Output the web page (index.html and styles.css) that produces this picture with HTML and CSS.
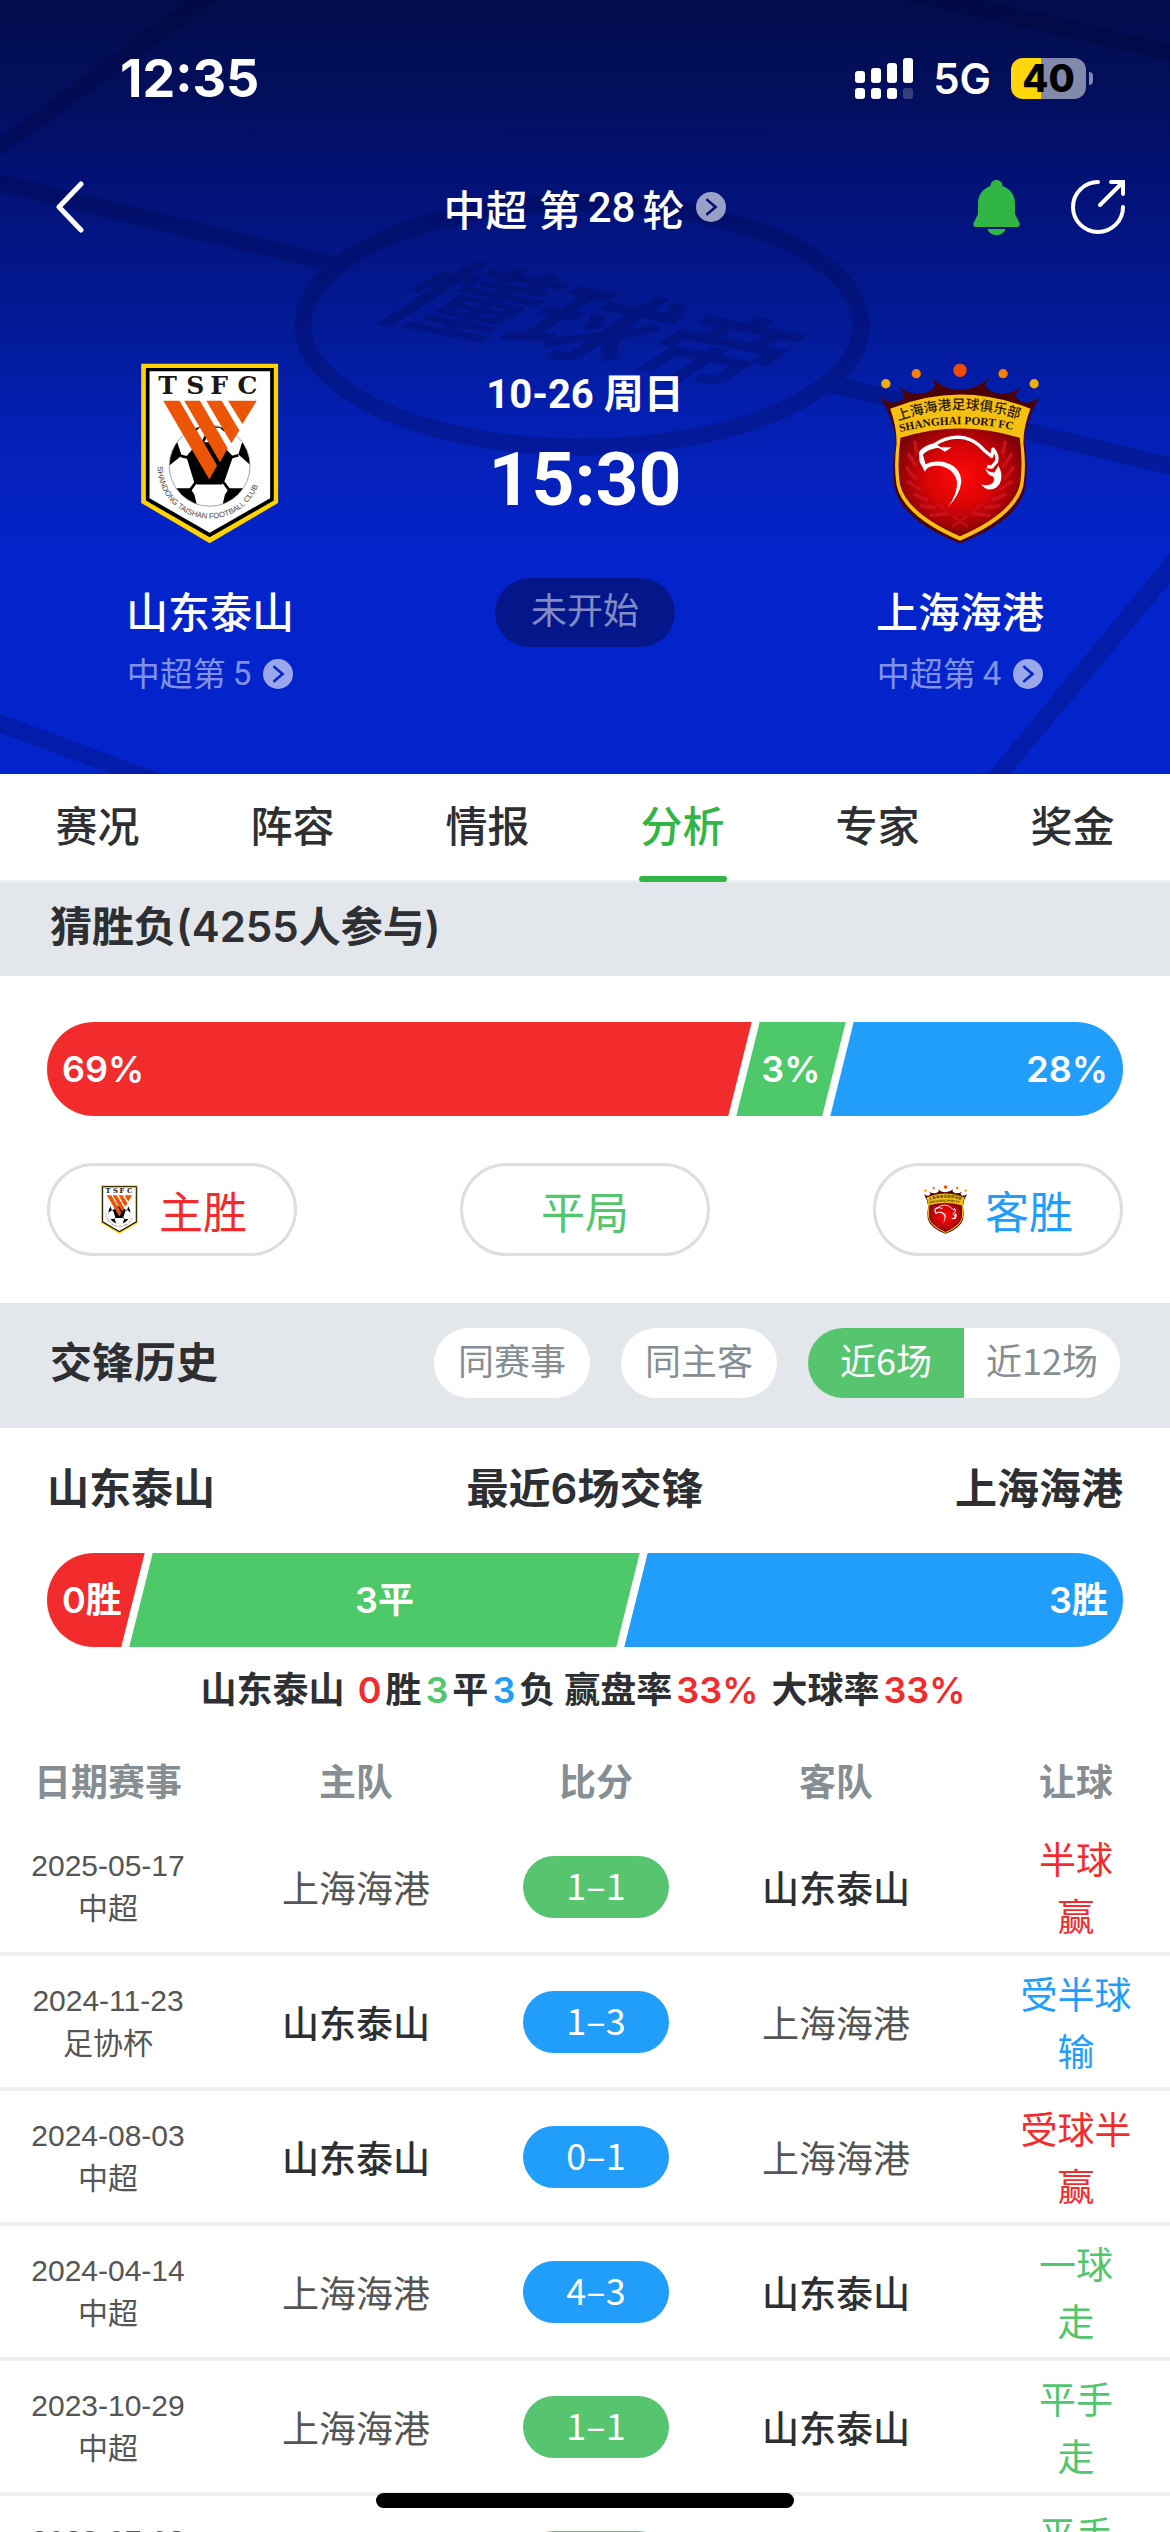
FILE: index.html
```html
<!DOCTYPE html>
<html lang="zh-CN">
<head>
  <meta charset="UTF-8">
  <meta name="viewport" content="width=device-width, initial-scale=1.0">
  <title>山东泰山 - 上海海港</title>
  <link rel="stylesheet" href="styles.css">
</head>
<body>
  <!-- shared icon -->
  <svg class="sprite" aria-hidden="true">
    <symbol id="icon-go" viewBox="0 0 30 30">
      <path fill="currentColor" fill-rule="evenodd" d="M15 0a15 15 0 1 0 0 30a15 15 0 1 0 0-30ZM11.200 6.200L21.600 15L11.200 23.800Q9.500 23 10 21.500L17.500 15L10 8.500Q9.500 7 11.200 6.200Z"/>
    </symbol>
  </svg>

  <header class="hero">
    <svg class="hero-pitch" viewBox="0 0 1170 774" preserveAspectRatio="xMidYMid slice" aria-hidden="true">
      <path d="M188 0H218L0 156V137Z"/>
      <path d="M0 174L340 257L323 270L0 192Z"/>
      <path d="M846 379L1170 457V475L829 393Z"/>
      <path d="M0 714L162 774H112L0 733Z"/>
      <path d="M1170 553L988 774H1010L1170 583Z"/>
      <path d="M903 0H985L1170 44V61Z"/>
      <ellipse cx="582" cy="325" rx="279" ry="122"/>
      <text transform="matrix(1.25 0.25 -1.05 0.68 366 314)">懂球帝</text>
    </svg>

    <div class="status-bar">
      <span class="clock">12:35</span>
      <div class="status-icons">
        <svg class="signal" viewBox="0 0 58 41">
          <rect x="0" y="13" width="10" height="12" rx="3"/>
          <rect x="16" y="10" width="10" height="15" rx="3"/>
          <rect x="32" y="5" width="10" height="20" rx="3"/>
          <rect x="48" y="0" width="10" height="25" rx="3"/>
          <rect x="0" y="30" width="10" height="11" rx="3"/>
          <rect x="16" y="30" width="10" height="11" rx="3"/>
          <rect x="32" y="30" width="10" height="11" rx="3"/>
          <rect x="48" y="30" width="10" height="11" rx="3" opacity="0.2"/>
        </svg>
        <span class="network">5G</span>
        <span class="battery">40</span>
      </div>
    </div>

    <div class="nav-bar">
      <button class="icon-button" aria-label="返回">
        <svg class="icon-back" viewBox="0 0 28 52"><path d="M25 3L3 26L25 49"/></svg>
      </button>
      <a href="#" class="round-link">中超 第<span class="num">28</span>轮<svg class="icon-go"><use href="#icon-go"/></svg></a>
      <div class="nav-actions">
        <button class="icon-button" aria-label="提醒">
          <svg class="icon-bell" viewBox="0 0 47 55"><path d="M23.500 0C27 0 29.500 2.500 29.500 6C38 9 42 16 42 23V34L46.500 43C47.500 45.500 46 47 44 47H3C1 47-.5 45.500.5 43L5 34V23C5 16 9 9 17.500 6C17.500 2.500 20 0 23.500 0ZM14.500 49H32.500C31 53 27.500 55 23.500 55C19.500 55 16 53 14.500 49Z"/></svg>
        </button>
        <button class="icon-button" aria-label="分享">
          <svg class="icon-share" viewBox="0 0 54 54"><path d="M27 2A25 25 0 1 0 52 27M29 25L51 3M40 2H52V14"/></svg>
        </button>
      </div>
    </div>

    <div class="match">
      <div class="team">
        <svg class="crest" viewBox="65 38 412 542">
          <defs>
            <path id="taishan-arc" d="M114 348A156 156 0 0 0 426 348"/>
            <clipPath id="ball-clip"><circle cx="270" cy="346" r="120"/></clipPath>
          </defs>
          <g id="crest-taishan">
            <path fill="#ffd400" d="M65 40H475V457L270 578L65 457Z"/>
            <path fill="#000" d="M79 53H462V450L270 560L79 450Z"/>
            <path fill="#fff" d="M90 63H451V443L270 546L90 443Z"/>
            <text class="crest-tsfc" x="116 200 272 353" y="130">TSFC</text>
            <circle cx="270" cy="346" r="121" fill="#fff" stroke="#777" stroke-width="2"/>
            <g clip-path="url(#ball-clip)" fill="#000">
              <path d="M195 238Q270 215 345 238L312 242L300 232H240L228 242Z"/>
              <path d="M215 300L245 275H300L340 318L313 396L306 402H232L224 396L200 318Z"/>
              <path d="M140 350V290L172 272L186 316L150 344Z"/>
              <path d="M400 350V290L368 272L356 312L392 344Z"/>
              <path d="M165 413H212L224 432L236 480H180Z"/>
              <path d="M375 413H328L316 432L304 480H360Z"/>
              <path fill="none" stroke="#000" stroke-width="8" d="M184 316L214 324M356 314L330 322M228 396L212 418M312 396L328 418M262 250L246 282"/>
            </g>
            <g fill="#ec5406">
              <path d="M131 151H180L292 345L269 387Z"/>
              <path d="M194 151H241L324 293L301 335Z"/>
              <path d="M260 151H306L359 240L335 278Z"/>
              <path d="M325 151H411L368 221Z"/>
            </g>
            <text class="crest-ring"><textPath href="#taishan-arc">SHANDONG TAISHAN FOOTBALL CLUB</textPath></text>
          </g>
        </svg>
        <div class="team-name">山东泰山</div>
        <a href="#" class="team-rank">中超第<span class="num">5</span><svg class="icon-go"><use href="#icon-go"/></svg></a>
      </div>
      <div class="kickoff">
        <div class="kickoff-date">10-26 周日</div>
        <div class="kickoff-time">15:30</div>
        <div class="kickoff-state">未开始</div>
      </div>
      <div class="team">
        <svg class="crest" viewBox="30 38 482 542">
          <defs>
            <radialGradient id="port-red" cx="50%" cy="45%" r="55%">
              <stop offset="0" stop-color="#ff0a06"/>
              <stop offset="0.5" stop-color="#d90406"/>
              <stop offset="1" stop-color="#7c0308"/>
            </radialGradient>
            <path id="port-arc-cn" d="M86 211Q271 144 460 209"/>
            <path id="port-arc-en" d="M92 245Q271 198 456 245"/>
          </defs>
          <g id="crest-port">
            <circle cx="271" cy="60" r="20" fill="#f24b04"/>
            <circle cx="140" cy="70" r="14" fill="#f77f08"/>
            <circle cx="400" cy="70" r="14" fill="#f77f08"/>
            <circle cx="49" cy="100" r="14" fill="#f0ae08"/>
            <circle cx="493" cy="100" r="14" fill="#f0ae08"/>
            <path fill="#4b0207" d="M32 138Q56 160 80 156Q108 148 103 130L88 110Q120 134 156 130Q196 122 196 102L186 82Q222 118 271 118Q320 118 358 82L346 102Q350 122 386 130Q422 134 454 110L439 130Q436 148 462 156Q486 160 510 138Q470 205 464 270Q476 345 467 410Q446 510 271 578Q96 510 75 410Q66 345 80 270Q72 205 32 138Z"/>
            <path fill="#f6c012" d="M62 175Q271 90 482 175Q460 230 461 280Q470 345 461 403Q440 498 271 570Q102 498 81 403Q72 345 81 280Q82 230 62 175Z"/>
            <path fill="url(#port-red)" d="M93 262Q271 206 450 262Q460 340 451 400Q432 486 271 557Q110 486 91 400Q82 340 93 262Z"/>
            <g fill="none" stroke="#c8101a" stroke-width="11" stroke-linecap="round">
              <path d="M136 275L142 308M118 312L138 345M112 352L138 384M118 395L150 416M136 432L172 448M156 466L196 472M184 494L232 490"/>
              <path d="M406 275L400 308M424 312L404 345M430 352L404 384M424 395L392 416M406 432L370 448M386 466L346 472M358 494L310 490"/>
              <path stroke-width="6" d="M206 460L232 484M336 460L310 484M250 526L292 496M292 526L250 496"/>
            </g>
            <path fill="none" stroke="#fff" stroke-width="10" stroke-linejoin="round" d="M194 283Q224 262 262 260Q310 260 344 300L366 318L370 296Q386 314 380 334L366 350L352 348"/>
            <path fill="#fff" d="M194 278Q158 286 148 306L150 334L166 364Q174 342 208 346Q254 354 262 394Q264 430 234 470Q272 432 275 392Q272 346 220 334Q186 330 168 342L160 312Q176 296 206 292L226 304L246 290L214 290Z"/>
            <path fill="#fff" d="M346 352Q354 366 374 366L386 346Q398 366 394 388Q386 418 356 417Q344 414 334 402Q360 408 370 396Q376 386 370 378Q352 374 346 352Z"/>
            <text class="crest-cn"><textPath href="#port-arc-cn">上海海港足球俱乐部</textPath></text>
            <text class="crest-en"><textPath href="#port-arc-en">SHANGHAI PORT FC</textPath></text>
          </g>
        </svg>
        <div class="team-name">上海海港</div>
        <a href="#" class="team-rank">中超第<span class="num">4</span><svg class="icon-go"><use href="#icon-go"/></svg></a>
      </div>
    </div>
  </header>

  <nav class="tabs">
    <a href="#" class="tab">赛况</a>
    <a href="#" class="tab">阵容</a>
    <a href="#" class="tab">情报</a>
    <a href="#" class="tab active">分析</a>
    <a href="#" class="tab">专家</a>
    <a href="#" class="tab">奖金</a>
  </nav>

  <main>
    <section>
      <div class="section-head">
        <h2 class="section-title">猜胜负(4255人参与)</h2>
      </div>
      <div class="vote">
        <div class="ratio">
          <div class="part home" style="flex-grow: 69"><span>69%</span></div>
          <div class="part draw" style="flex-grow: 3"><span>3%</span></div>
          <div class="part away" style="flex-grow: 28"><span>28%</span></div>
        </div>
        <div class="vote-buttons">
          <button class="vote-button red"><svg class="crest-small" viewBox="65 38 412 542"><use href="#crest-taishan"/></svg>主胜</button>
          <button class="vote-button green">平局</button>
          <button class="vote-button blue"><svg class="crest-small" viewBox="30 38 482 542"><use href="#crest-port"/></svg>客胜</button>
        </div>
      </div>
    </section>

    <section>
      <div class="section-head tall">
        <h2 class="section-title">交锋历史</h2>
        <div class="filters">
          <button class="filter">同赛事</button>
          <button class="filter">同主客</button>
          <div class="filter-group">
            <button class="filter active">近6场</button>
            <button class="filter">近12场</button>
          </div>
        </div>
      </div>

      <div class="history">
        <div class="history-title">
          <span>山东泰山</span>
          <span>最近6场交锋</span>
          <span>上海海港</span>
        </div>
        <div class="ratio">
          <div class="part home" style="flex-grow: 0"><span>0胜</span></div>
          <div class="part draw" style="flex-grow: 3"><span>3平</span></div>
          <div class="part away" style="flex-grow: 3"><span>3胜</span></div>
        </div>
        <p class="summary">山东泰山 <b class="red">0</b>胜<b class="green">3</b>平<b class="blue">3</b>负 赢盘率<b class="red">33%</b> 大球率<b class="red">33%</b></p>
      </div>

      <table class="games">
        <thead>
          <tr>
            <th class="col-date">日期赛事</th>
            <th>主队</th>
            <th>比分</th>
            <th>客队</th>
            <th class="col-odds">让球</th>
          </tr>
        </thead>
        <tbody>
          <tr>
            <td class="col-date">2025-05-17<br>中超</td>
            <td>上海海港</td>
            <td><span class="score draw">1–1</span></td>
            <td class="own">山东泰山</td>
            <td class="col-odds red">半球<br>赢</td>
          </tr>
          <tr>
            <td class="col-date">2024-11-23<br>足协杯</td>
            <td class="own">山东泰山</td>
            <td><span class="score">1–3</span></td>
            <td>上海海港</td>
            <td class="col-odds blue">受半球<br>输</td>
          </tr>
          <tr>
            <td class="col-date">2024-08-03<br>中超</td>
            <td class="own">山东泰山</td>
            <td><span class="score">0–1</span></td>
            <td>上海海港</td>
            <td class="col-odds red">受球半<br>赢</td>
          </tr>
          <tr>
            <td class="col-date">2024-04-14<br>中超</td>
            <td>上海海港</td>
            <td><span class="score">4–3</span></td>
            <td class="own">山东泰山</td>
            <td class="col-odds green">一球<br>走</td>
          </tr>
          <tr>
            <td class="col-date">2023-10-29<br>中超</td>
            <td>上海海港</td>
            <td><span class="score draw">1–1</span></td>
            <td class="own">山东泰山</td>
            <td class="col-odds green">平手<br>走</td>
          </tr>
          <tr>
            <td class="col-date">2023-07-03<br>中超</td>
            <td class="own">山东泰山</td>
            <td><span class="score draw">1–1</span></td>
            <td>上海海港</td>
            <td class="col-odds green">平手<br>走</td>
          </tr>
        </tbody>
      </table>
    </section>
  </main>

  <div class="home-indicator"></div>
</body>
</html>
```
FILE: styles.css
```css
* {
  box-sizing: border-box;
}

body {
  margin: 0;
  background-color: #fff;
  color: #2d2f33;
  font-family: Inter, "Noto Sans CJK SC", sans-serif;
  font-size: 36px;
}

a {
  color: inherit;
  text-decoration: none;
}

button {
  padding: 0;
  border: none;
  background: none;
  font-family: inherit;
  font-size: 36px;
  cursor: pointer;
}

svg {
  display: block;
}

.sprite {
  position: absolute;
  width: 0;
  height: 0;
}

.red {
  color: #f22c2d;
}

.green {
  color: #52c66c;
}

.blue {
  color: #209efa;
}

/* club badges */
.crest-tsfc {
  font: bold 75px "DejaVu Serif", serif;
  fill: #1f1512;
}

.crest-ring {
  font: 23px "Liberation Sans", sans-serif;
  fill: #444;
}

.crest-cn {
  font: 500 41px "Noto Sans CJK SC", sans-serif;
  fill: #2a1a05;
}

.crest-en {
  font: bold 34px "Liberation Serif", serif;
  fill: #1c0f04;
}

/* header */
.hero {
  position: relative;
  overflow: hidden;
  padding-bottom: 80px;
  color: #fff;
  background: linear-gradient(#020d4c 0, #020f5c 90px, #021070 160px, #021583 240px, #031a98 330px, #0420b4 430px, #0424cb 560px);
}

.hero-pitch {
  position: absolute;
  top: 0;
  left: 0;
  width: 100%;
  height: 100%;
  fill: #000028;
  opacity: 0.2;
}

.hero-pitch ellipse {
  fill: none;
  stroke: #000028;
  stroke-width: 17px;
}

.hero-pitch text {
  font: bold 100px "Noto Sans CJK SC", sans-serif;
}

.status-bar {
  position: relative;
  display: flex;
  justify-content: space-between;
  align-items: center;
  height: 156px;
  padding: 0 77px 0 120px;
}

.clock {
  font-size: 52px;
  font-weight: 700;
}

.status-icons {
  display: flex;
  align-items: center;
  gap: 20px;
}

.signal {
  width: 58px;
  height: 41px;
  fill: #fff;
}

.network {
  font-size: 42px;
  font-weight: 600;
}

.battery {
  position: relative;
  width: 75px;
  height: 41px;
  margin-right: 7px;
  border-radius: 12px;
  background: linear-gradient(90deg, #ffd60a 40%, #8389ad 40%);
  color: #000;
  font-size: 38px;
  font-weight: 800;
  line-height: 41px;
  text-align: center;
}

.battery::after {
  content: "";
  position: absolute;
  top: 14px;
  right: -7px;
  width: 4px;
  height: 13px;
  border-radius: 0 4px 4px 0;
  background-color: #8389ad;
}

.nav-bar {
  position: relative;
  display: flex;
  justify-content: center;
  align-items: center;
  height: 102px;
}

.nav-bar > .icon-button {
  position: absolute;
  left: 56px;
}

.nav-actions {
  position: absolute;
  right: 45px;
  display: flex;
  gap: 51px;
}

.icon-back {
  width: 28px;
  height: 52px;
  fill: none;
  stroke: #fff;
  stroke-width: 5px;
  stroke-linecap: round;
  stroke-linejoin: round;
}

.icon-bell {
  width: 47px;
  height: 55px;
  fill: #31b545;
}

.icon-share {
  width: 54px;
  height: 54px;
  fill: none;
  stroke: #fff;
  stroke-width: 4px;
  stroke-linecap: round;
}

.icon-go {
  width: 30px;
  height: 30px;
  margin-left: 12px;
}

.num {
  margin: 0 7px;
  font-family: Roboto, sans-serif;
}

.round-link {
  display: flex;
  align-items: center;
  font-size: 42px;
  font-weight: 500;
  white-space: pre;
}

.round-link .icon-go {
  color: rgba(255, 255, 255, 0.6);
}

.match {
  position: relative;
  display: grid;
  grid-template-columns: 14fr 11fr 14fr;
  padding-top: 105px;
}

.team,
.kickoff {
  display: flex;
  flex-direction: column;
  align-items: center;
}

.crest {
  width: 162px;
  height: 181px;
}

.team-name {
  margin-top: 39px;
  font-size: 42px;
  font-weight: 500;
  line-height: 60px;
}

.team-rank {
  display: flex;
  align-items: center;
  margin-top: 11px;
  color: rgba(255, 255, 255, 0.5);
  font-size: 33px;
  line-height: 40px;
}

.team-rank .num {
  margin-right: 0;
}

.team-rank .icon-go {
  color: rgba(255, 255, 255, 0.6);
}

.kickoff {
  padding-top: 7px;
  font-family: Roboto, "Noto Sans CJK SC", sans-serif;
}

.kickoff-date {
  font-size: 40px;
  font-weight: 700;
  line-height: 50px;
}

.kickoff-time {
  margin-top: 19px;
  font-size: 75px;
  font-weight: 700;
  line-height: 80px;
}

.kickoff-state {
  width: 180px;
  margin-top: 59px;
  border-radius: 35px;
  background-color: #03178b;
  color: rgba(255, 255, 255, 0.5);
  font-size: 36px;
  line-height: 69px;
  text-align: center;
}

/* tabs */
.tabs {
  display: flex;
  border-bottom: 2px solid #efeff0;
}

.tab {
  position: relative;
  flex: 1;
  font-size: 42px;
  font-weight: 500;
  line-height: 106px;
  text-align: center;
}

.tab.active {
  color: #31b545;
}

.tab.active::after {
  content: "";
  position: absolute;
  bottom: -2px;
  left: calc(50% - 44px);
  width: 88px;
  height: 6px;
  border-radius: 3px;
  background-color: #31b545;
}

/* sections */
.section-head {
  display: flex;
  justify-content: space-between;
  align-items: center;
  min-height: 94px;
  padding: 0 50px 5px;
  background-color: #e3e6eb;
}

.section-head.tall {
  min-height: 125px;
}

.section-title {
  margin: 0;
  font-size: 42px;
  font-weight: 600;
  line-height: 60px;
}

.vote {
  padding: 46px 47px 47px;
}

/* ratio bar, parts are cut at a slant */
.ratio {
  display: flex;
  gap: 8px;
  height: 94px;
  border-radius: 47px;
  overflow: hidden;
  color: #fff;
  font-size: 36px;
  font-weight: 600;
  line-height: 94px;
}

.part {
  position: relative;
  z-index: 0;
  flex: 1 1 0;
  min-width: 86px;
  text-align: center;
}

.part::before {
  content: "";
  position: absolute;
  z-index: -1;
  top: 0;
  right: 0;
  bottom: 0;
  left: 0;
  transform: skewX(-14deg);
}

.part.home {
  text-align: left;
}

.part.home span {
  margin-left: 15px;
}

.part.home::before {
  left: -40px;
  background-color: #f22c2d;
}

.part.draw::before {
  background-color: #4dc969;
}

.part.away {
  text-align: right;
}

.part.away span {
  margin-right: 15px;
}

.part.away::before {
  right: -40px;
  background-color: #209efa;
}

.vote-buttons {
  display: flex;
  justify-content: space-between;
  margin-top: 47px;
}

.vote-button {
  display: flex;
  justify-content: center;
  align-items: center;
  gap: 17px;
  width: 250px;
  height: 93px;
  border: 3px solid #dddede;
  border-radius: 47px;
  font-size: 44px;
}

.crest-small {
  width: 45px;
  height: 49px;
}

.filters {
  display: flex;
  gap: 31px;
}

.filter-group {
  display: flex;
  border-radius: 35px;
  overflow: hidden;
}

.filter {
  width: 156px;
  height: 70px;
  padding-bottom: 8px;
  border-radius: 35px;
  background-color: #fff;
  color: #868e93;
  font-family: "Noto Sans CJK SC", sans-serif;
}

.filter-group .filter {
  border-radius: 0;
}

.filter.active {
  background-color: #57c56f;
  color: #fff;
}

/* head to head */
.history {
  padding: 31px 47px 26px;
}

.history-title {
  display: flex;
  justify-content: space-between;
  margin-bottom: 34px;
  font-size: 42px;
  font-weight: 600;
  line-height: 60px;
}

.summary {
  margin: 18px 0 0;
  font-weight: 600;
  line-height: 50px;
  text-align: center;
}

.summary b {
  margin: 0 4px;
  font-weight: 600;
}

.games {
  width: 100%;
  border-spacing: 0;
  table-layout: fixed;
  font-family: "Noto Sans CJK SC", sans-serif;
  font-size: 37px;
  text-align: center;
}

.games th {
  width: 240px;
  height: 80px;
  padding: 0 0 2px;
  color: #868e93;
  font-weight: 600;
}

.games td {
  height: 135px;
  padding: 0;
  border-bottom: 4px solid #eeeff1;
  color: #555;
}

.games .col-date {
  width: 236px;
  padding-right: 20px;
}

.games td.col-date {
  font-family: "Liberation Sans", "Noto Sans CJK SC", sans-serif;
  font-size: 30px;
  line-height: 43px;
}

.games .col-odds {
  width: 214px;
  padding-left: 26px;
}

.games td.col-odds {
  line-height: 57px;
}

.games td.own {
  color: #2d2f33;
  font-weight: 500;
}

.games td.red {
  color: #f22c2d;
}

.games td.green {
  color: #52c66c;
}

.games td.blue {
  color: #209efa;
}

.score {
  display: block;
  width: 146px;
  margin: 0 auto;
  padding-bottom: 6px;
  border-radius: 31px;
  background-color: #209efa;
  color: #fff;
  font-size: 36px;
  line-height: 56px;
}

.score.draw {
  background-color: #57c56f;
}

.home-indicator {
  position: fixed;
  bottom: 24px;
  left: 50%;
  width: 418px;
  height: 15px;
  border-radius: 8px;
  background-color: #000;
  transform: translateX(-50%);
}
```
